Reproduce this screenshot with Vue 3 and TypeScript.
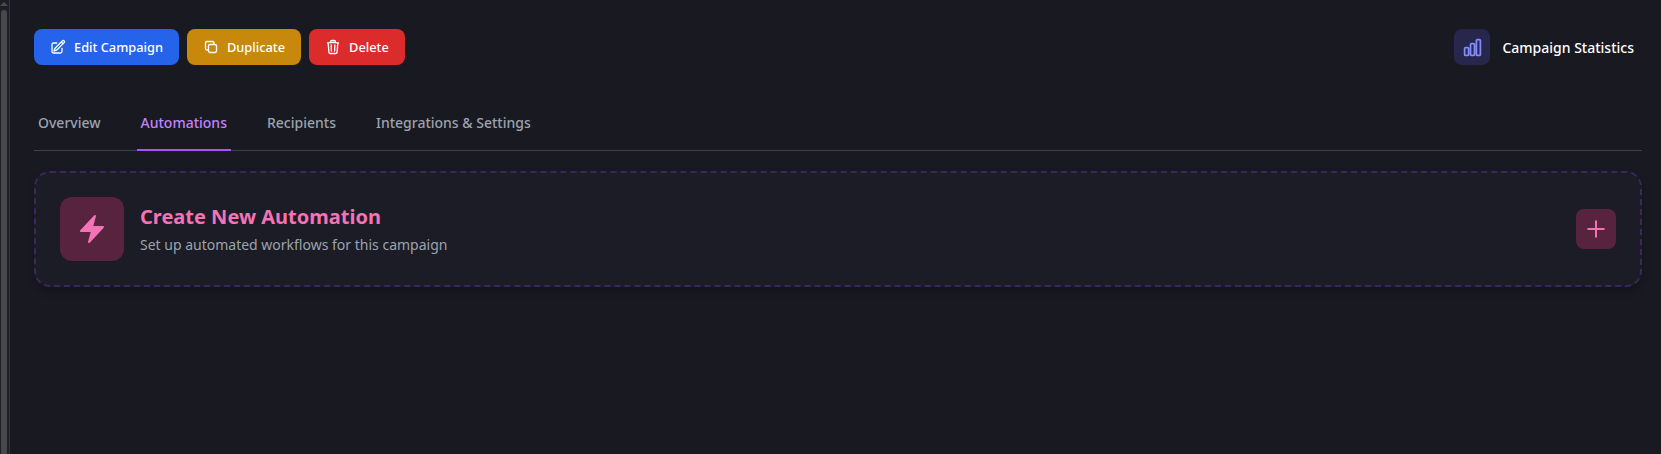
<script setup lang="ts">
const actions = [
  {
    label: 'Edit Campaign',
    kind: 'blue',
    path: 'm16.862 4.487 1.687-1.688a1.875 1.875 0 1 1 2.652 2.652L10.582 16.07a4.5 4.5 0 0 1-1.897 1.13L6 18l.8-2.685a4.5 4.5 0 0 1 1.13-1.897l8.932-8.931Zm0 0L19.5 7.125M18 14v4.75A2.25 2.25 0 0 1 15.75 21H5.25A2.25 2.25 0 0 1 3 18.75V8.25A2.25 2.25 0 0 1 5.25 6H10',
  },
  {
    label: 'Duplicate',
    kind: 'amber',
    path: 'M16.5 8.25V6a2.25 2.25 0 0 0-2.25-2.25H6A2.25 2.25 0 0 0 3.75 6v8.25A2.25 2.25 0 0 0 6 16.5h2.25m8.25-8.25H18a2.25 2.25 0 0 1 2.25 2.25V18A2.25 2.25 0 0 1 18 20.25h-7.5A2.25 2.25 0 0 1 8.25 18v-1.5m8.25-8.25h-6a2.25 2.25 0 0 0-2.25 2.25v6',
  },
  {
    label: 'Delete',
    kind: 'red',
    path: 'm14.74 9-.346 9m-4.788 0L9.26 9m9.968-3.21c.342.052.682.107 1.022.166m-1.022-.165L18.16 19.673a2.25 2.25 0 0 1-2.244 2.077H8.084a2.25 2.25 0 0 1-2.244-2.077L4.772 5.79m14.456 0a48.108 48.108 0 0 0-3.478-.397m-12 .562c.34-.059.68-.114 1.022-.165m0 0a48.11 48.11 0 0 1 3.478-.397m7.5 0v-.916c0-1.18-.91-2.164-2.09-2.201a51.964 51.964 0 0 0-3.32 0c-1.18.037-2.09 1.022-2.09 2.201v.916m7.5 0a48.667 48.667 0 0 0-7.5 0',
  },
] as const

const tabs = ['Overview', 'Automations', 'Recipients', 'Integrations & Settings']
const activeTab = 'Automations'
</script>

<template>
  <div class="page">
    <aside class="scrollbar">
      <span class="scroll-arrow"></span>
      <span class="scroll-thumb"></span>
    </aside>

    <main class="content">
      <header class="toolbar">
        <div class="actions">
          <button v-for="a in actions" :key="a.label" :class="['action', a.kind]">
            <svg class="action-icon" viewBox="0 0 24 24" fill="none" stroke="currentColor" stroke-width="2" stroke-linecap="round" stroke-linejoin="round">
              <path :d="a.path" />
            </svg>
            <span>{{ a.label }}</span>
          </button>
        </div>

        <button class="stats">
          <span class="stats-icon">
            <svg viewBox="0 0 24 24" fill="none" stroke="currentColor" stroke-width="2" stroke-linecap="round" stroke-linejoin="round">
              <path d="M3 13.125C3 12.504 3.504 12 4.125 12h2.25c.621 0 1.125.504 1.125 1.125v6.75C7.5 20.496 6.996 21 6.375 21h-2.25A1.125 1.125 0 0 1 3 19.875v-6.75ZM9.75 8.625c0-.621.504-1.125 1.125-1.125h2.25c.621 0 1.125.504 1.125 1.125v11.25c0 .621-.504 1.125-1.125 1.125h-2.25a1.125 1.125 0 0 1-1.125-1.125V8.625ZM16.5 4.125c0-.621.504-1.125 1.125-1.125h2.25C20.496 3 21 3.504 21 4.125v15.75c0 .621-.504 1.125-1.125 1.125h-2.25a1.125 1.125 0 0 1-1.125-1.125V4.125Z" />
            </svg>
          </span>
          <span>Campaign Statistics</span>
        </button>
      </header>

      <nav class="tabs">
        <a v-for="t in tabs" :key="t" :class="['tab', { active: t === activeTab }]">{{ t }}</a>
      </nav>

      <section class="create-card">
        <div class="create-icon">
          <svg viewBox="0 0 24 24" fill="currentColor">
            <path fill-rule="evenodd" clip-rule="evenodd" d="M14.615 1.595a.75.75 0 0 1 .359.852L12.982 9.75h7.268a.75.75 0 0 1 .548 1.262l-10.5 11.25a.75.75 0 0 1-1.272-.71l1.992-7.302H3.75a.75.75 0 0 1-.548-1.262l10.5-11.25a.75.75 0 0 1 .913-.143Z" />
          </svg>
        </div>
        <div class="create-text">
          <h3>Create New Automation</h3>
          <p>Set up automated workflows for this campaign</p>
        </div>
        <button class="create-add">
          <svg viewBox="0 0 24 24" fill="none" stroke="currentColor" stroke-width="2" stroke-linejoin="round">
            <path d="M12 3.5v17m8.5-8.5h-17" />
          </svg>
        </button>
      </section>
    </main>
  </div>
</template>

<style>
html,
body {
  margin: 0;
  background: #181921;
  overflow: hidden;
}
</style>

<style scoped>
.page {
  display: flex;
  height: 454px;
  background: #181921;
  font-family: 'Noto Sans', sans-serif;
}

.scrollbar {
  flex: 0 0 9px;
  display: flex;
  flex-direction: column;
  align-items: flex-start;
  background: #1e1f24;
  border-right: 1px solid #34353a;
}

.scroll-arrow {
  width: 0;
  height: 0;
  margin: 2px 0 4px;
  border-left: 4px solid transparent;
  border-right: 4px solid transparent;
  border-bottom: 4px solid #4a4b4e;
}

.scroll-thumb {
  width: 6px;
  margin-left: 1px;
  flex: 1;
  border-radius: 3px 3px 0 0;
  background: #47484b;
}

.content {
  flex: 1;
  min-width: 0;
  padding: 29px 19px 0 24px;
}

.toolbar {
  display: flex;
  justify-content: space-between;
  align-items: center;
}

.actions {
  display: flex;
  gap: 8px;
}

.action {
  display: flex;
  align-items: center;
  gap: 8px;
  height: 36px;
  padding: 0 16px;
  border: 0;
  border-radius: 8px;
  color: #fff;
  font: 500 12.8px 'Noto Sans', sans-serif;
}

.action-icon {
  width: 16px;
  height: 16px;
}

.blue {
  background: #2563eb;
}

.amber {
  background: #c7880b;
}

.red {
  background: #dc2b2b;
}

.stats {
  display: flex;
  align-items: center;
  gap: 12px;
  padding: 0 8px;
  border: 0;
  background: none;
  color: #fff;
  font: 500 14px 'Noto Sans', sans-serif;
}

.stats-icon {
  display: flex;
  align-items: center;
  justify-content: center;
  width: 36px;
  height: 36px;
  border-radius: 8px;
  background: #27274d;
  color: #818cf8;
}

.stats-icon svg {
  width: 21px;
  height: 21px;
}

.tabs {
  display: flex;
  gap: 32px;
  margin-top: 32px;
  border-bottom: 1px solid #374151;
}

.tab {
  padding: 16px 4px;
  margin-bottom: -1px;
  border-bottom: 2px solid transparent;
  color: #9ca3af;
  font-size: 14px;
  font-weight: 500;
  line-height: 20px;
}

.tab.active {
  border-bottom-color: #a855f7;
  color: #c084fc;
}

.create-card {
  display: flex;
  align-items: center;
  gap: 16px;
  margin-top: 20px;
  padding: 24px;
  border: 2px dashed #3b2660;
  border-radius: 16px;
  background: #1b1c25;
  box-shadow: 0 4px 8px rgba(0, 0, 0, 0.2);
}

.create-icon {
  display: flex;
  align-items: center;
  justify-content: center;
  width: 64px;
  height: 64px;
  border-radius: 12px;
  background: #57233f;
  color: #f472b6;
}

.create-icon svg {
  width: 32px;
  height: 32px;
}

.create-text {
  flex: 1;
}

.create-text h3 {
  margin: 0 0 4px;
  color: #f472b6;
  font-size: 20px;
  font-weight: 700;
  line-height: 28px;
}

.create-text p {
  margin: 0;
  color: #9ca3af;
  font-size: 14px;
  line-height: 20px;
}

.create-add {
  display: flex;
  align-items: center;
  justify-content: center;
  width: 40px;
  height: 40px;
  padding: 0;
  border: 0;
  border-radius: 8px;
  background: #57233f;
  color: #f472b6;
}

.create-add svg {
  width: 24px;
  height: 24px;
}
</style>
